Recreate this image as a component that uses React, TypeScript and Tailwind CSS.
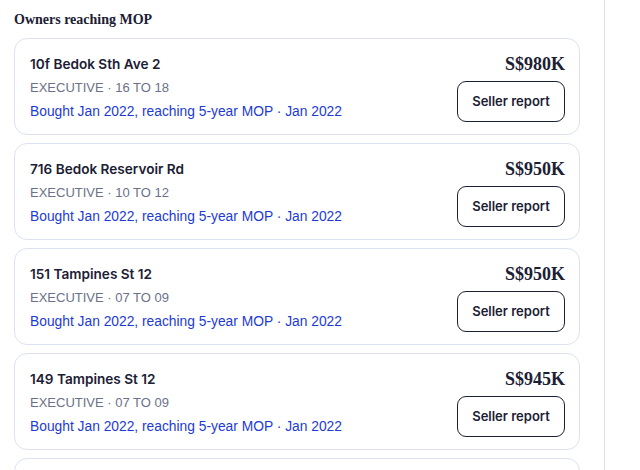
const owners = [
  { address: "10f Bedok Sth Ave 2", type: "EXECUTIVE", floors: "16 TO 18", price: "S$980K" },
  { address: "716 Bedok Reservoir Rd", type: "EXECUTIVE", floors: "10 TO 12", price: "S$950K" },
  { address: "151 Tampines St 12", type: "EXECUTIVE", floors: "07 TO 09", price: "S$950K" },
  { address: "149 Tampines St 12", type: "EXECUTIVE", floors: "07 TO 09", price: "S$945K" },
  { address: "148 Tampines St 12", type: "EXECUTIVE", floors: "04 TO 06", price: "S$940K" },
];

function OwnerCard({ address, type, floors, price }: (typeof owners)[number]) {
  return (
    <div className="flex justify-between rounded-[13px] border border-[#dce2f0] bg-white pl-[15px] pr-[14px] pt-[15px] pb-[12px]">
      <div className="flex flex-col gap-[4px] leading-[20px]">
        <div className="font-['Inter',sans-serif] text-[13.6px] font-semibold text-[#1b2034]">{address}</div>
        <div className="font-['Liberation_Sans',Arial,sans-serif] text-[13px] text-[#6b7189]">
          {type} · {floors}
        </div>
        <div className="font-['Liberation_Sans',Arial,sans-serif] text-[13.8px] text-[#1c3bd6]">
          Bought Jan 2022, reaching 5-year MOP · Jan 2022
        </div>
      </div>
      <div className="flex flex-col items-end">
        <div className="font-['Liberation_Serif',serif] text-[18px] font-bold leading-[21px] text-[#1b2034]">
          {price}
        </div>
        <button className="mt-[6px] h-[41px] w-[108px] rounded-[9px] border border-[#1b2034] bg-white font-['Inter',sans-serif] text-[13px] font-semibold text-[#1b2034]">
          Seller report
        </button>
      </div>
    </div>
  );
}

export default function App() {
  return (
    <div className="flex h-[470px] w-[640px] overflow-hidden bg-white">
      <div className="w-[605px] shrink-0 border-r border-[#dce2f0] pl-[14px] pr-[24px] pt-[10px]">
        <h2 className="mb-[8px] font-['Liberation_Serif',serif] text-[14px] font-bold leading-[20px] text-[#1b2034]">
          Owners reaching MOP
        </h2>
        <div className="flex flex-col gap-[8px]">
          {owners.map((o) => (
            <OwnerCard key={o.address} {...o} />
          ))}
        </div>
      </div>
    </div>
  );
}
